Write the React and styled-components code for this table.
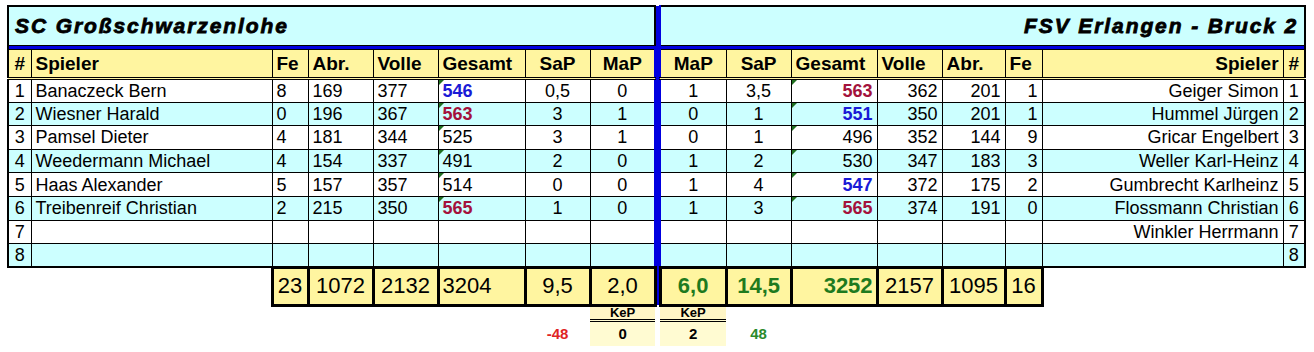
import React from "react";
import styled, { createGlobalStyle, css } from "styled-components";

const GlobalStyle = createGlobalStyle`
    body {
        margin: 0;
        padding: 5px 0 0 7px;
        background: #fff;
        font-family: "Liberation Sans", Arial, sans-serif;
        color: #000;
    }
`;

const CYAN = "#ccffff";
const YELLOW = "#fff5a0";
const BLUE = "#0000e0";

const Sheet = styled.table`
    border-collapse: collapse;
    table-layout: fixed;
    width: 1298px;
`;

const TitleCell = styled.td`
    height: 38px;
    padding: 0 6px;
    background: ${CYAN};
    border: 2px solid #000;
    border-bottom-width: 1px;
    font-size: 21px;
    font-weight: 700;
    font-style: italic;
    letter-spacing: 1.9px;
    -webkit-text-stroke: 0.8px #000;
    text-align: ${p => p.$align || "left"};
    white-space: nowrap;
`;

const BlueBar = styled.td`
    height: 3px;
    padding: 0;
    background: ${BLUE};
    border-left: 2px solid #000;
    border-right: 2px solid #000;
`;

const Divider = styled.td`
    padding: 0;
    background: ${p => (p.$off ? "transparent" : BLUE)};
    border-left: ${p => (p.$off ? "none" : `2px solid ${BLUE}`)};
    border-right: ${p => (p.$off ? "none" : `2px solid ${BLUE}`)};
`;

const HeadCell = styled.th`
    height: 26px;
    padding: 1px 4px 0;
    background: ${YELLOW};
    border: 1px solid #000;
    border-bottom: 3px double #000;
    font-size: 19px;
    font-weight: 700;
    text-align: ${p => p.$align || "left"};
    white-space: nowrap;
    ${p => p.$edge === "left" && css`border-left: 2px solid #000;`}
    ${p => p.$edge === "right" && css`border-right: 2px solid #000;`}
`;

const Row = styled.tr`
    height: 23.6px;
    background: ${p => (p.$band ? CYAN : "#fff")};
`;

const toneColor = {
    blue: "#1a1ad6",
    red: "#a3123c",
};

const Cell = styled.td`
    position: relative;
    padding: 0 4px;
    border: 1px solid #000;
    font-size: 18px;
    line-height: 20px;
    text-align: ${p => p.$align || "left"};
    white-space: nowrap;
    overflow: hidden;
    ${p => p.$tone && css`
        color: ${toneColor[p.$tone]};
        font-weight: 700;
    `}
    ${p => p.$edge === "left" && css`border-left: 2px solid #000;`}
    ${p => p.$edge === "right" && css`border-right: 2px solid #000;`}
    ${p => p.$last && css`border-bottom: 2px solid #000;`}
    ${p => p.$flag && css`
        &::before {
            content: "";
            position: absolute;
            top: 0;
            left: 0;
            border-top: 5px solid #1f6f1f;
            border-right: 5px solid transparent;
        }
    `}
`;

const Blank = styled.td`
    padding: 0;
    border: none;
`;

const TotalCell = styled.td`
    height: 35px;
    padding: 0 3px;
    background: ${YELLOW};
    border: 3px solid #000;
    font-size: 22px;
    text-align: ${p => p.$align || "center"};
    white-space: nowrap;
    ${p => p.$green && css`
        color: #1e7a1e;
        font-weight: 700;
    `}
`;

const KepLabel = styled.td`
    height: 11px;
    padding: 0;
    background: #fff6c6;
    border-bottom: 3px double #000;
    font-size: 13px;
    line-height: 12px;
    font-weight: 700;
    text-align: center;
`;

const KepValue = styled.td`
    height: 24px;
    padding: 0;
    background: ${p => (p.$fill ? "#fffbd2" : "transparent")};
    color: ${p => p.$color || "#000"};
    font-size: 15px;
    font-weight: 700;
    text-align: center;
`;

const widths = [23, 241, 36, 65, 65, 87, 65, 65, 5, 66, 65, 86, 65, 63, 37, 241, 22];

const home = [
    ["Banaczeck Bern", "8", "169", "377", "546", "blue", "0,5", "0"],
    ["Wiesner Harald", "0", "196", "367", "563", "red", "3", "1"],
    ["Pamsel Dieter", "4", "181", "344", "525", null, "3", "1"],
    ["Weedermann Michael", "4", "154", "337", "491", null, "2", "0"],
    ["Haas Alexander", "5", "157", "357", "514", null, "0", "0"],
    ["Treibenreif Christian", "2", "215", "350", "565", "red", "1", "0"],
    ["", "", "", "", "", null, "", ""],
    ["", "", "", "", "", null, "", ""],
];

const guest = [
    ["1", "3,5", "563", "red", "362", "201", "1", "Geiger Simon"],
    ["0", "1", "551", "blue", "350", "201", "1", "Hummel Jürgen"],
    ["0", "1", "496", null, "352", "144", "9", "Gricar Engelbert"],
    ["1", "2", "530", null, "347", "183", "3", "Weller Karl-Heinz"],
    ["1", "4", "547", "blue", "372", "175", "2", "Gumbrecht Karlheinz"],
    ["1", "3", "565", "red", "374", "191", "0", "Flossmann Christian"],
    ["", "", "", null, "", "", "", "Winkler Herrmann"],
    ["", "", "", null, "", "", "", ""],
];

const App = () => {
    return (
        <>
            <GlobalStyle />
            <Sheet>
                <colgroup>
                    {widths.map((w, i) => <col key={i} style={{ width: w }} />)}
                </colgroup>
                <tbody>
                    <tr>
                        <TitleCell colSpan={8}>SC Großschwarzenlohe</TitleCell>
                        <Divider />
                        <TitleCell colSpan={8} $align="right">FSV Erlangen - Bruck 2</TitleCell>
                    </tr>
                    <tr>
                        <BlueBar colSpan={17} />
                    </tr>
                    <tr>
                        <HeadCell $align="center" $edge="left">#</HeadCell>
                        <HeadCell>Spieler</HeadCell>
                        <HeadCell>Fe</HeadCell>
                        <HeadCell>Abr.</HeadCell>
                        <HeadCell>Volle</HeadCell>
                        <HeadCell>Gesamt</HeadCell>
                        <HeadCell $align="center">SaP</HeadCell>
                        <HeadCell $align="center">MaP</HeadCell>
                        <Divider />
                        <HeadCell $align="center">MaP</HeadCell>
                        <HeadCell $align="center">SaP</HeadCell>
                        <HeadCell>Gesamt</HeadCell>
                        <HeadCell>Volle</HeadCell>
                        <HeadCell>Abr.</HeadCell>
                        <HeadCell>Fe</HeadCell>
                        <HeadCell $align="right">Spieler</HeadCell>
                        <HeadCell $align="center" $edge="right">#</HeadCell>
                    </tr>
                    {home.map((h, i) => {
                        const g = guest[i];
                        const last = i === home.length - 1;
                        return (
                            <Row key={i} $band={i % 2 === 1}>
                                <Cell $align="center" $edge="left" $last={last}>{i + 1}</Cell>
                                <Cell $last={last}>{h[0]}</Cell>
                                <Cell $last={last}>{h[1]}</Cell>
                                <Cell $last={last}>{h[2]}</Cell>
                                <Cell $last={last}>{h[3]}</Cell>
                                <Cell $last={last} $tone={h[5]} $flag={i < 6}>{h[4]}</Cell>
                                <Cell $align="center" $last={last}>{h[6]}</Cell>
                                <Cell $align="center" $last={last}>{h[7]}</Cell>
                                <Divider />
                                <Cell $align="center" $last={last}>{g[0]}</Cell>
                                <Cell $align="center" $last={last}>{g[1]}</Cell>
                                <Cell $align="right" $last={last} $tone={g[3]} $flag={i < 6}>{g[2]}</Cell>
                                <Cell $align="right" $last={last}>{g[4]}</Cell>
                                <Cell $align="right" $last={last}>{g[5]}</Cell>
                                <Cell $align="right" $last={last}>{g[6]}</Cell>
                                <Cell $align="right" $last={last}>{g[7]}</Cell>
                                <Cell $align="center" $edge="right" $last={last}>{i + 1}</Cell>
                            </Row>
                        );
                    })}
                    <tr>
                        <Blank colSpan={2} />
                        <TotalCell>23</TotalCell>
                        <TotalCell>1072</TotalCell>
                        <TotalCell>2132</TotalCell>
                        <TotalCell $align="left">3204</TotalCell>
                        <TotalCell>9,5</TotalCell>
                        <TotalCell>2,0</TotalCell>
                        <Divider />
                        <TotalCell $green>6,0</TotalCell>
                        <TotalCell $green>14,5</TotalCell>
                        <TotalCell $green $align="right">3252</TotalCell>
                        <TotalCell>2157</TotalCell>
                        <TotalCell>1095</TotalCell>
                        <TotalCell>16</TotalCell>
                        <Blank colSpan={2} />
                    </tr>
                    <tr>
                        <Blank colSpan={7} />
                        <KepLabel>KeP</KepLabel>
                        <Divider $off />
                        <KepLabel>KeP</KepLabel>
                        <Blank colSpan={7} />
                    </tr>
                    <tr>
                        <Blank colSpan={6} />
                        <KepValue $color="#e02424">-48</KepValue>
                        <KepValue $fill>0</KepValue>
                        <Divider $off />
                        <KepValue $fill>2</KepValue>
                        <KepValue $color="#2b8a2b">48</KepValue>
                        <Blank colSpan={6} />
                    </tr>
                </tbody>
            </Sheet>
        </>
    );
};

export default App;
